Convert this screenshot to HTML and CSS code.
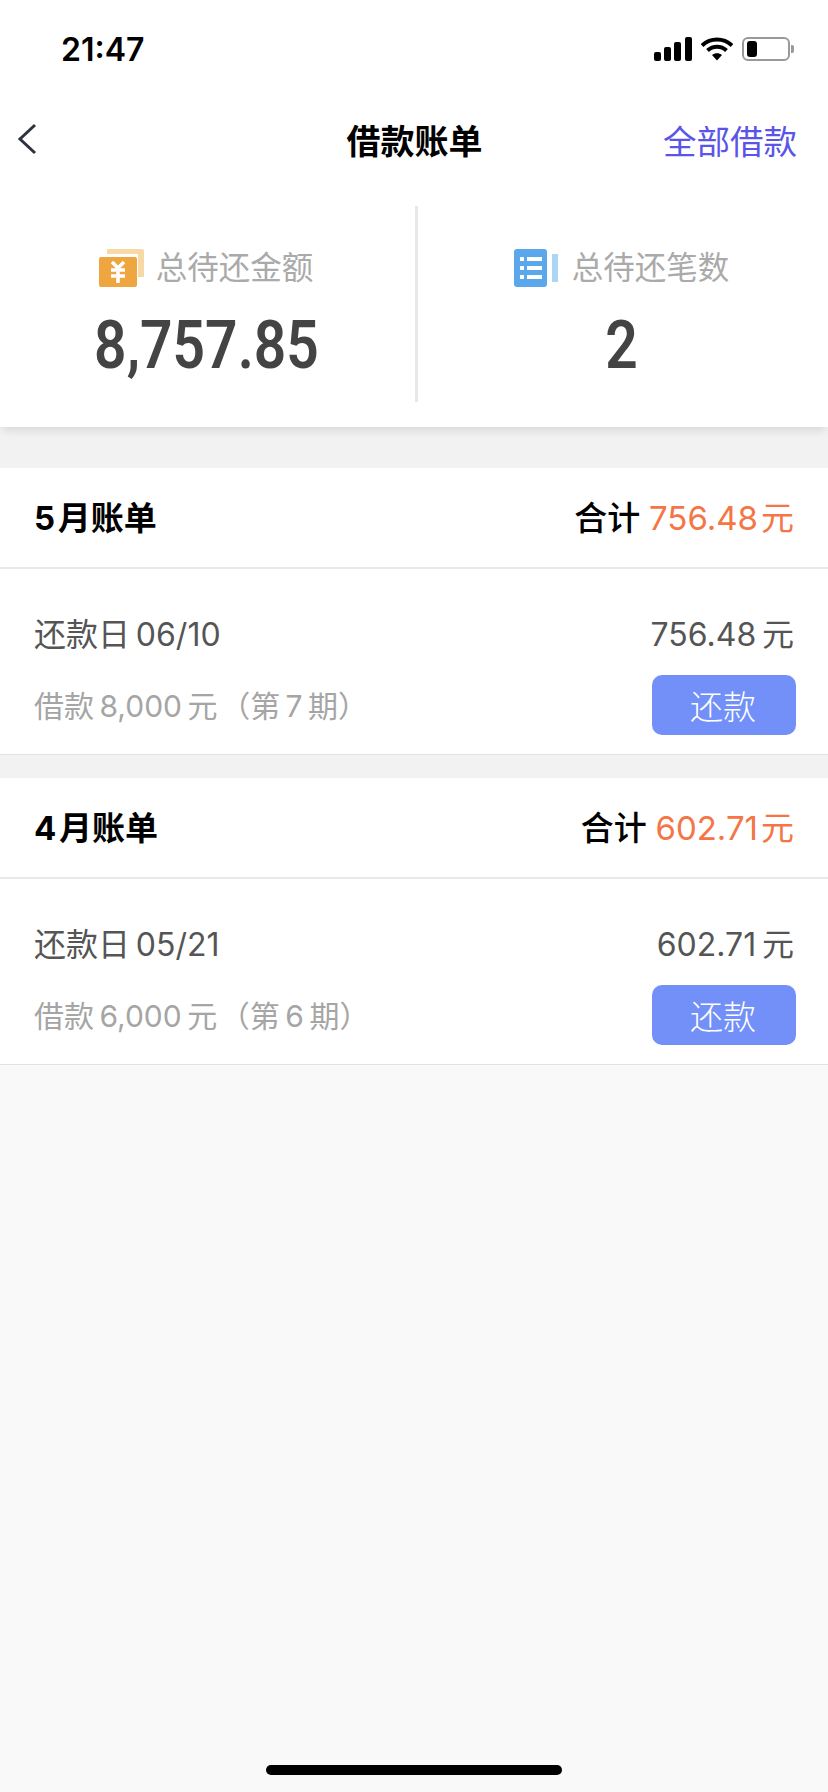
FILE: index.html
```html
<!DOCTYPE html>
<html lang="zh-CN">
<head>
    <meta charset="UTF-8">
    <meta name="viewport" content="width=device-width, initial-scale=1.0">
    <title>借款账单</title>
    <link rel="stylesheet" href="styles.css">
</head>
<body>

    <div class="status-bar">
        <span class="status-time">21:47</span>
        <div class="status-icons">
            <svg class="icon-signal" width="38" height="24" viewBox="0 0 38 24">
                <rect x="0" y="15" width="7" height="9" rx="2"/>
                <rect x="10" y="10" width="7" height="14" rx="2"/>
                <rect x="20" y="5" width="7" height="19" rx="2"/>
                <rect x="31" y="0" width="7" height="24" rx="2"/>
            </svg>
            <svg class="icon-wifi" width="32" height="24" viewBox="0 0 32 24">
                <path d="M1 8.5C9.5 .5 22.500 .5 31 8.500" fill="none" stroke="#000" stroke-width="4"/>
                <path d="M6.500 13.500C12 8.500 20 8.500 25.500 13.500" fill="none" stroke="#000" stroke-width="4"/>
                <path d="M11 18c3-2.500 7-2.500 10 0l-5 5.500z"/>
            </svg>
            <div class="battery">
                <div class="battery-level"></div>
            </div>
            <div class="battery-cap"></div>
        </div>
    </div>

    <div class="nav-bar">
        <svg class="nav-back" width="20" height="32" viewBox="0 0 20 32">
            <path d="M18 2L3 16l15 14" fill="none" stroke="#2d3440" stroke-width="3"/>
        </svg>
        <h1 class="nav-title">借款账单</h1>
        <a class="nav-link">全部借款</a>
    </div>

    <div class="summary">
        <div class="summary-col">
            <div class="summary-label">
                <svg width="45" height="38" viewBox="0 0 45 38">
                    <path d="M8 0h35a2 2 0 0 1 2 2v26h-6V5H8z" fill="#f6d9a4"/>
                    <rect x="0" y="8" width="38" height="30" rx="2" fill="#f0a640"/>
                    <path d="M13 13l6 6 6-6M12 21h14M12 27h14M19 19v15" fill="none" stroke="#fff" stroke-width="3.500"/>
                </svg>
                <span>总待还金额</span>
            </div>
            <div class="summary-value">8,757.85</div>
        </div>
        <div class="summary-col">
            <div class="summary-label">
                <svg width="44" height="38" viewBox="0 0 44 38">
                    <rect x="0" y="0" width="33" height="38" rx="3" fill="#5ba7ec"/>
                    <rect x="38" y="5" width="6" height="28" fill="#acd6f6"/>
                    <path d="M6 8h4v4H6zM13 8h15v4H13zM6 17h4v4H6zM13 17h15v4H13zM6 26h4v4H6zM13 26h15v4H13z" fill="#fff"/>
                </svg>
                <span>总待还笔数</span>
            </div>
            <div class="summary-value">2</div>
        </div>
    </div>

    <div class="bills">
        <div class="bill">
            <div class="bill-head">
                <span class="bill-month">5&#8202;月账单</span>
                <span class="bill-total">合计 <em>756.48&#8202;元</em></span>
            </div>
            <div class="bill-row">
                <div class="bill-line">
                    <span class="bill-date">还款日&#8201;06/10</span>
                    <span class="bill-amount">756.48&#8201;元</span>
                </div>
                <div class="bill-line">
                    <span class="bill-sub">借款&#8201;8,000&#8201;元&#8202;（第&#8201;7&#8201;期）</span>
                    <button class="pay-button">还款</button>
                </div>
            </div>
        </div>

        <div class="bill">
            <div class="bill-head">
                <span class="bill-month">4&#8202;月账单</span>
                <span class="bill-total">合计 <em>602.71&#8202;元</em></span>
            </div>
            <div class="bill-row">
                <div class="bill-line">
                    <span class="bill-date">还款日&#8201;05/21</span>
                    <span class="bill-amount">602.71&#8201;元</span>
                </div>
                <div class="bill-line">
                    <span class="bill-sub">借款&#8201;6,000&#8201;元&#8202;（第&#8201;6&#8201;期）</span>
                    <button class="pay-button">还款</button>
                </div>
            </div>
        </div>
    </div>

    <div class="home-indicator"></div>

</body>
</html>
```

FILE: styles.css
```css
html, body {
    height: 100%;
}
body {
    margin: 0;
    height: 1792px;
    overflow: hidden;
    position: relative;
    background-color: #f9f9f9;
    color: #333;
    font-family: 'Inter', 'Noto Sans CJK SC', sans-serif;
}

/* Status bar */
.status-bar {
    height: 88px;
    box-sizing: border-box;
    padding: 10px 34px 0 61px;
    display: flex;
    justify-content: space-between;
    align-items: center;
    background-color: #fff;
}
.status-time {
    font-size: 32px;
    font-weight: 600;
    color: #000;
}
.status-icons {
    display: flex;
    align-items: center;
}
.icon-signal {
    margin-right: 9px;
}
.battery {
    width: 48px;
    height: 24px;
    margin-left: 9px;
    padding: 2px 3px;
    box-sizing: border-box;
    border: 2px solid #999;
    border-radius: 6px;
}
.battery-level {
    width: 10px;
    height: 16px;
    background-color: #000;
    border-radius: 3px;
}
.battery-cap {
    width: 3px;
    height: 8px;
    margin-left: 1px;
    background-color: #999;
    border-radius: 0 2px 2px 0;
}

/* Nav bar */
.nav-bar {
    height: 92px;
    box-sizing: border-box;
    padding: 10px 31px 0 32px;
    display: grid;
    grid-template-columns: 1fr auto 1fr;
    align-items: center;
    background-color: #fff;
}
.nav-back {
    margin-left: -15px;
}
.nav-title {
    margin: 0;
    font-size: 34px;
    font-weight: 700;
    color: #000;
}
.nav-link {
    justify-self: end;
    font-size: 33.5px;
    color: #5a55e8;
}

/* Summary panel */
.summary {
    height: 247px;
    padding: 26px 0;
    box-sizing: border-box;
    display: flex;
    background-color: #fff;
    box-shadow: 0 6px 9px -3px rgba(0, 0, 0, 0.12);
    position: relative;
}
.summary-col {
    flex: 1;
    height: 196px;
    text-align: center;
}
.summary-col:first-child {
    flex: none;
    width: 415px;
    border-right: 3px solid #e8e8e8;
}
.summary-col:first-child .summary-label {
    margin-right: 3px;
}
.summary-col:first-child .summary-value {
    margin-right: 2px;
}
.summary-col:last-child {
    padding-right: 3px;
}
.summary-col:last-child .summary-label {
    gap: 14px;
}
.summary-label {
    margin-top: 42px;
    display: flex;
    justify-content: center;
    align-items: center;
    gap: 12px;
    font-size: 31.5px;
    line-height: 40px;
    color: #aaa;
}
.summary-value {
    margin-top: 21px;
    font-family: 'Roboto', sans-serif;
    font-size: 67px;
    line-height: 72px;
    font-weight: 600;
    color: #444;
    transform: scaleX(0.85);
}

/* Bill cards */
.bills {
    padding-top: 41px;
    display: flex;
    flex-direction: column;
    gap: 23px;
    background-color: #f2f2f2;
}
.bill {
    background-color: #fff;
    border-bottom: 1px solid #e2e2e2;
}
.bill-head {
    height: 99px;
    padding: 0 34px;
    display: flex;
    justify-content: space-between;
    align-items: center;
    border-bottom: 2px solid #e9e9e9;
}
.bill-month {
    font-size: 33px;
    line-height: 96px;
    font-weight: 700;
    color: #000;
}
.bill-total {
    font-size: 33px;
    line-height: 96px;
    font-weight: 500;
    color: #000;
}
.bill-total em {
    font-style: normal;
    font-weight: 400;
    color: #f47646;
}
.bill-row {
    height: 185px;
    padding: 38px 32px 0 34px;
    box-sizing: border-box;
}
.bill-line {
    display: flex;
    justify-content: space-between;
    align-items: center;
    height: 50px;
    margin-bottom: 23px;
}
.bill-date {
    font-size: 32px;
    color: #555;
}
.bill-amount {
    margin-right: 2px;
    font-size: 32px;
    color: #555;
}
.bill-sub {
    margin-top: -2px;
    font-size: 30px;
    color: #a5a5a5;
}
.pay-button {
    width: 144px;
    height: 60px;
    padding: 0 2px 0 0;
    border: none;
    border-radius: 10px;
    background-color: #7290f8;
    color: #fff;
    font-family: inherit;
    font-size: 33px;
    font-weight: 300;
}

.home-indicator {
    position: absolute;
    left: 266px;
    top: 1765px;
    width: 296px;
    height: 10px;
    border-radius: 5px;
    background-color: #000;
}
```
